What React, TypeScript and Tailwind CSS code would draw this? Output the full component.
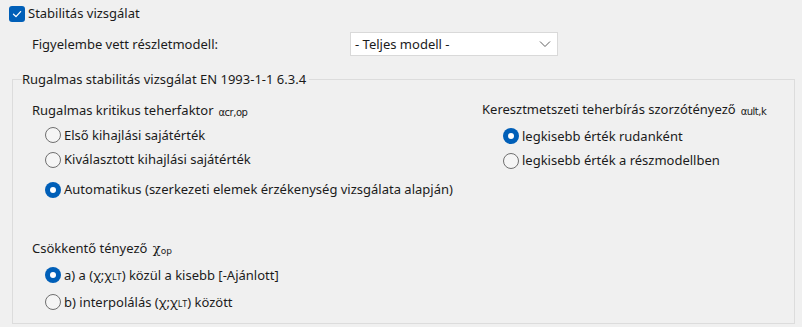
import type { ReactNode } from 'react';

const FONT = "font-['Noto_Sans',sans-serif]";

function Radio({ checked, children }: { checked?: boolean; children: ReactNode }) {
  return (
    <div className="flex items-center gap-[3px] h-full">
      {checked ? (
        <span className="w-[16px] h-[16px] rounded-full bg-[#005fb8] flex items-center justify-center flex-shrink-0">
          <span className="w-[6px] h-[6px] rounded-full bg-white" />
        </span>
      ) : (
        <span className="w-[16px] h-[16px] rounded-full border border-[#6f6f6f] bg-[#f5f5f5] flex-shrink-0" />
      )}
      <span className="whitespace-nowrap">{children}</span>
    </div>
  );
}

function Sym({ children }: { children: ReactNode }) {
  return (
    <span className="text-[10px] ml-[5px] text-[#1a1a1a] font-['DejaVu_Sans',sans-serif] tracking-[-0.5px] relative top-[1px]">
      {children}
    </span>
  );
}

export default function App() {
  return (
    <div className={`w-[802px] h-[327px] bg-[#f0f0f0] text-[#1b1b1b] text-[13px] leading-none ${FONT} overflow-hidden`}>
      {/* ─── Checkbox ─── */}
      <div className="flex items-center gap-[3px] pl-[9px] pt-[5px] h-[22px]">
        <span className="w-[16px] h-[16px] rounded-[3px] bg-[#005fb8] flex items-center justify-center">
          <svg width="10" height="10" viewBox="0 0 10 10" fill="none">
            <path d="M1.5 5.2 L4 7.6 L8.6 2.6" stroke="white" strokeWidth="1.3" strokeLinecap="round" strokeLinejoin="round" />
          </svg>
        </span>
        <span>Stabilitás vizsgálat</span>
      </div>

      {/* ─── Model select ─── */}
      <div className="flex items-center pl-[32px] mt-[10px] h-[24px]">
        <span className="w-[318px]">Figyelembe vett részletmodell:</span>
        <div className="w-[208px] h-[24px] bg-white border border-[#d9d9d9] flex items-center justify-between pl-[4px] pr-[6px]">
          <span>- Teljes modell -</span>
          <svg width="12" height="8" viewBox="0 0 12 8" fill="none">
            <path d="M1 1.5 L6 6.5 L11 1.5" stroke="#606060" strokeWidth="1" />
          </svg>
        </div>
      </div>

      {/* ─── Group box ─── */}
      <fieldset className="ml-[12px] mr-[7px] mt-[13px] h-[255px] border border-[#dcdcdc] px-[19px]">
        <legend className="ml-[-10px] h-[20px] leading-[20px] pr-[3px]">
          Rugalmas stabilitás vizsgálat EN 1993-1-1 6.3.4
        </legend>
        <div className="flex">
          <div className="w-[450px]">
            <div className="h-[24px] mt-[9px] flex items-center whitespace-nowrap">
              <span>
                Rugalmas kritikus teherfaktor<Sym>αcr,op</Sym>
              </span>
            </div>
            <div className="pl-[13px]">
              <div className="h-[25px] pt-[1px]"><Radio>Első kihajlási sajátérték</Radio></div>
              <div className="h-[25px]"><Radio>Kiválasztott kihajlási sajátérték</Radio></div>
              <div className="h-[30px] pt-[5px]"><Radio checked>Automatikus (szerkezeti elemek érzékenység vizsgálata alapján)</Radio></div>
            </div>
            <div className="h-[24px] mt-[34px] flex items-center whitespace-nowrap">
              <span>
                Csökkentő tényező{' '}
                <span className="ml-[2px] text-[13px] font-['DejaVu_Serif',serif]">χ</span>
                <span className="text-[9px] font-['DejaVu_Sans',sans-serif] relative top-[1px]">op</span>
              </span>
            </div>
            <div className="pl-[13px]">
              <div className="h-[28px] pt-[2px]">
                <Radio checked>
                  a) a (χ;χ<span className="text-[9px]">LT</span>) közül a kisebb [-Ajánlott]
                </Radio>
              </div>
              <div className="h-[27px] pt-[1px]">
                <Radio>
                  b) interpolálás (χ;χ<span className="text-[9px]">LT</span>) között
                </Radio>
              </div>
            </div>
          </div>
          <div className="flex-1">
            <div className="h-[24px] mt-[8px] flex items-center whitespace-nowrap">
              <span>
                Keresztmetszeti teherbírás szorzótényező<Sym>αult,k</Sym>
              </span>
            </div>
            <div className="pl-[21px]">
              <div className="h-[27px] pt-[3px]"><Radio checked>legkisebb érték rudanként</Radio></div>
              <div className="h-[25px]"><Radio>legkisebb érték a részmodellben</Radio></div>
            </div>
          </div>
        </div>
      </fieldset>
    </div>
  );
}
